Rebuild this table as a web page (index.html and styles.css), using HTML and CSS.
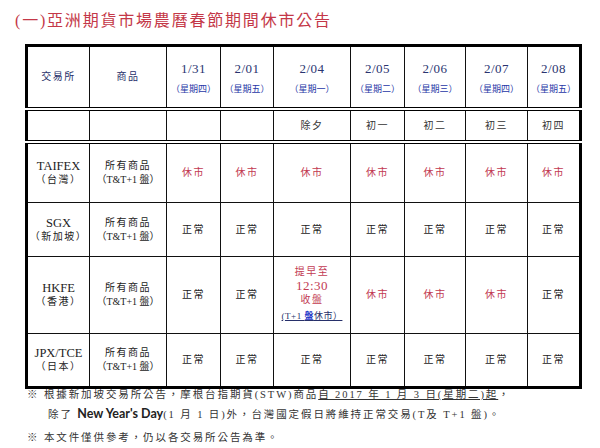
FILE: index.html
```html
<!DOCTYPE html>
<html lang="zh-Hant">
<head>
<meta charset="utf-8">
<link rel="stylesheet" href="styles.css">
</head>
<body>
<h1 class="title">(一)亞洲期貨市場農曆春節期間休市公告</h1>
<table class="grid">
  <colgroup>
    <col style="width:63px"><col style="width:77px"><col style="width:54px"><col style="width:53px"><col style="width:77px"><col style="width:54px"><col style="width:61px"><col style="width:62px"><col style="width:53px">
  </colgroup>
  <tr class="r-head">
    <td class="hd">交易所</td>
    <td class="hd">商品</td>
    <td><div class="date">1/31</div><div class="dow">（星期四）</div></td>
    <td><div class="date">2/01</div><div class="dow">（星期五）</div></td>
    <td><div class="date">2/04</div><div class="dow">（星期一）</div></td>
    <td><div class="date">2/05</div><div class="dow">（星期二）</div></td>
    <td><div class="date">2/06</div><div class="dow">（星期三）</div></td>
    <td><div class="date">2/07</div><div class="dow">（星期四）</div></td>
    <td><div class="date">2/08</div><div class="dow">（星期五）</div></td>
  </tr>
  <tr class="r-lunar">
    <td></td><td></td><td></td><td></td>
    <td class="lunar">除夕</td>
    <td class="lunar">初一</td>
    <td class="lunar">初二</td>
    <td class="lunar">初三</td>
    <td class="lunar">初四</td>
  </tr>
  <tr class="r-tw">
    <td class="ex"><div class="lat">TAIFEX</div><div>（台灣）</div></td>
    <td class="prod"><div>所有商品</div><div class="tt">（T&amp;T+1 盤）</div></td>
    <td class="off">休市</td><td class="off">休市</td><td class="off">休市</td><td class="off">休市</td><td class="off">休市</td><td class="off">休市</td><td class="off">休市</td>
  </tr>
  <tr class="r-sg">
    <td class="ex"><div class="lat">SGX</div><div>（新加坡）</div></td>
    <td class="prod"><div>所有商品</div><div class="tt">（T&amp;T+1 盤）</div></td>
    <td class="on">正常</td><td class="on">正常</td><td class="on">正常</td><td class="on">正常</td><td class="on">正常</td><td class="on">正常</td><td class="on">正常</td>
  </tr>
  <tr class="r-hk">
    <td class="ex"><div class="lat">HKFE</div><div>（香港）</div></td>
    <td class="prod"><div>所有商品</div><div class="tt">（T&amp;T+1 盤）</div></td>
    <td class="on">正常</td><td class="on">正常</td>
    <td class="early"><div>提早至</div><div class="time">12:30</div><div>收盤</div><div class="note"><span class="ul">(T+1 <b>盤</b>休市）</span></div></td>
    <td class="off">休市</td><td class="off">休市</td><td class="off">休市</td>
    <td class="on">正常</td>
  </tr>
  <tr class="r-jp">
    <td class="ex"><div class="lat">JPX/TCE</div><div>（日本）</div></td>
    <td class="prod"><div>所有商品</div><div class="tt">（T&amp;T+1 盤）</div></td>
    <td class="on">正常</td><td class="on">正常</td><td class="on">正常</td><td class="on">正常</td><td class="on">正常</td><td class="on">正常</td><td class="on">正常</td>
  </tr>
</table>
<div class="notes">
  <p class="n1">※ 根據新加坡交易所公告，摩根台指期貨(STW)商品<span class="u">自 2017 年 1 月 3 日(星期二)起</span>，</p>
  <p class="n2">除了 <b class="nyd">New Year's Day</b>(1 月 1 日)外，台灣國定假日將維持正常交易(T及 T+1 盤)。</p>
  <p class="n3">※ 本文件僅供參考，仍以各交易所公告為準。</p>
</div>
</body>
</html>
```
FILE: styles.css
```css
html, body {
  margin: 0;
  padding: 0;
  background: #fff;
}
body {
  width: 600px;
  height: 448px;
  overflow: hidden;
  font-family: "Liberation Serif", "Noto Sans CJK TC", serif;
  color: #222;
}
.title {
  margin: 0;
  padding: 11px 0 0 15px;
  height: 44px;
  box-sizing: border-box;
  font-size: 16px;
  line-height: 20px;
  font-weight: 400;
  letter-spacing: 1.8px;
  color: #c43848;
}
.grid {
  margin-left: 25px;
  width: 554px;
  table-layout: fixed;
  border-collapse: collapse;
  border: 3px solid #000;
}
.grid td {
  border: 1px solid #111;
  text-align: center;
  vertical-align: middle;
  padding: 0;
  font-size: 10px;
  line-height: 14px;
  letter-spacing: 1.5px;
}
.r-head td { height: 60px; border-bottom: 4px double #000; }
.r-lunar td { height: 29px; border-bottom: 4px double #000; }
.r-tw td { height: 58px; }
.r-sg td { height: 53px; }
.r-hk td { height: 76px; }
.r-jp td { height: 52px; }
.hd { color: #27306a; font-size: 10.5px; letter-spacing: 3px; }
.date {
  font-size: 13px;
  line-height: 18px;
  color: #2a3470;
  letter-spacing: 0.5px;
  margin-bottom: 5px;
}
.dow {
  font-size: 9px;
  line-height: 12px;
  color: #2636a6;
  letter-spacing: 0;
}
.lunar { color: #333; font-size: 10.5px; letter-spacing: 3px; }
.ex { color: #222; font-size: 11px; line-height: 24px; letter-spacing: 0; }
.ex .lat { font-size: 12.5px; letter-spacing: 0; }
.prod { color: #222; font-size: 10px; line-height: 24px; letter-spacing: 2px; }
.prod .tt { font-size: 10px; letter-spacing: 0; }
.off { color: #c23a52; font-size: 10px; letter-spacing: 1px; }
.on { color: #222; font-size: 10px; letter-spacing: 3px; }
.early { color: #c23a52; font-size: 10px; line-height: 19px; letter-spacing: 2px; }
.early .time { font-size: 13px; letter-spacing: 0.5px; }
.early .note { color: #27306a; font-size: 9px; letter-spacing: 0.5px; line-height: 18px; }
.early .ul { text-decoration: underline; }
.early .note b { color: #1d35c8; font-weight: 700; }
.notes {
  padding-left: 27px;
  margin-top: -4px;
  color: #333;
  font-size: 10.5px;
  letter-spacing: 1.9px;
}
.notes p { margin: 0; line-height: 19px; }
.n2 { padding-left: 21px; }
.n3 { margin-top: 4px !important; }
.u { text-decoration: underline; }
.nyd {
  font-family: Lato, "Liberation Sans", sans-serif;
  font-size: 12.5px;
  letter-spacing: 0;
  color: #222;
}
```
